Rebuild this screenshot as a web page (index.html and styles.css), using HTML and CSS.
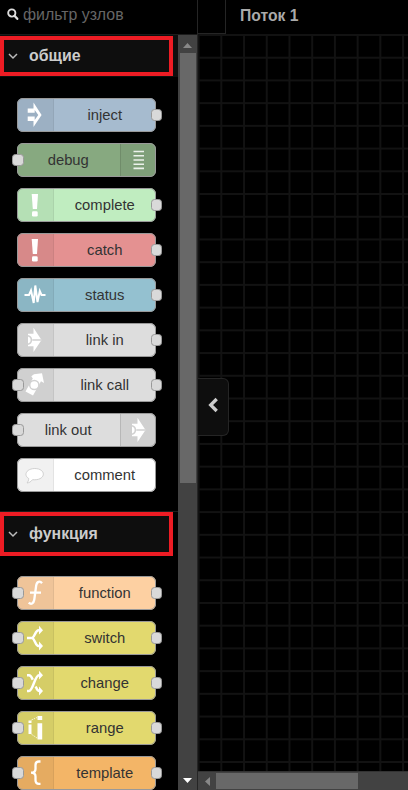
FILE: index.html
```html
<!DOCTYPE html>
<html lang="ru">
<head>
<meta charset="utf-8">
<title>Node-RED</title>
<link rel="stylesheet" href="styles.css">
</head>
<body>
<div class="app">
  <aside class="palette">
    <div class="search">
      <svg width="12" height="13" viewBox="0 0 12 13"><circle cx="4.8" cy="5" r="3.6" fill="none" stroke="#ddd" stroke-width="1.9"/><path d="M7.5 7.8L10.3 10.8" stroke="#ddd" stroke-width="2.3" stroke-linecap="round"/></svg>
      <span>фильтр узлов</span>
    </div>
    <div class="body">
      <div class="list">
        <section class="category first">
          <h2 class="heading"><svg class="chevron" width="10" height="7" viewBox="0 0 10 7"><path d="M1 1L5 5L9 1"/></svg>общие</h2>
          <div class="nodes">
            <div class="node inject"><span class="icon"><svg viewBox="0 0 36 34"><path d="M10.7 10.5H16.5V4.5L24.6 17L16.5 29V23H10.7V18.5H17.7V22L21.3 17L17.7 12V14.7H10.7Z"/></svg></span><span class="label">inject</span><i class="port out"></i></div>
            <div class="node debug right"><span class="icon"><svg viewBox="0 0 36 34"><path d="M12.5 8.5H23M12.5 12.7H23M12.5 17H23M12.5 21.2H23M12.5 25.4H23" fill="none" stroke="#fff" stroke-width="1.6" opacity=".85"/></svg></span><span class="label">debug</span><i class="port in"></i></div>
            <div class="node complete"><span class="icon"><svg viewBox="0 0 36 34"><path d="M14.7 6H21L20 21H15.8Z"/><rect x="15" y="23.3" width="5.7" height="5.2" rx="1.3"/></svg></span><span class="label">complete</span><i class="port out"></i></div>
            <div class="node catch"><span class="icon"><svg viewBox="0 0 36 34"><path d="M14.7 6H21L20 21H15.8Z"/><rect x="15" y="23.3" width="5.7" height="5.2" rx="1.3"/></svg></span><span class="label">catch</span><i class="port out"></i></div>
            <div class="node status"><span class="icon"><svg viewBox="0 0 36 34"><path d="M7.5 17H12L14 12.5L16.7 25L18.3 7.5L20.5 24L22.8 13L24.5 17H28.5" fill="none" stroke="#fff" stroke-width="2"/></svg></span><span class="label">status</span><i class="port out"></i></div>
            <div class="node link"><span class="icon"><svg viewBox="0 0 36 34"><path d="M11 10.8H16.5V4.8L24.5 17L16.5 29V23.3H11Z"/><path class="cut" d="M11 12.8A4.3 4.3 0 0 1 11 21.2M15.3 17H24.5"/></svg></span><span class="label">link in</span><i class="port out"></i></div>
            <div class="node link"><span class="icon"><svg viewBox="0 0 36 34"><path d="M14.3 8.3L17 6.3L25 5.3L27 15L24 13.2L16 27.5L8.5 23.4L15.8 10.5Z"/><circle class="cut" cx="17.3" cy="17" r="4.6"/></svg></span><span class="label">link call</span><i class="port in"></i><i class="port out"></i></div>
            <div class="node link right"><span class="icon"><svg viewBox="0 0 36 34"><path d="M11 10.8H16.5V4.8L24.5 17L16.5 29V23.3H11Z"/><path class="cut" d="M11 12.8A4.3 4.3 0 0 1 11 21.2M15.3 17H24.5"/></svg></span><span class="label">link out</span><i class="port in"></i></div>
            <div class="node comment"><span class="icon"><svg viewBox="0 0 36 34"><path d="M11.7 20.5C6.5 17.5 8.8 10.7 17.8 10.5C29.2 10.7 29.2 21.5 17.8 21.8L15.5 21.7C14 23.7 12 24.8 10 25C11 23.8 11.8 22.2 11.7 20.5Z" stroke="#ccc" stroke-width=".9"/></svg></span><span class="label">comment</span></div>
          </div>
        </section>
        <section class="category second">
          <h2 class="heading"><svg class="chevron" width="10" height="7" viewBox="0 0 10 7"><path d="M1 1L5 5L9 1"/></svg>функция</h2>
          <div class="nodes">
            <div class="node function"><span class="icon"><svg viewBox="0 0 36 34"><path d="M25 7.2C23 4.6 19.8 5.3 19.2 9.5L17.3 23.5C16.6 28 14 28.8 11.7 26.7M13 16.7H24" fill="none" stroke="#fff" stroke-width="2.3"/></svg></span><span class="label">function</span><i class="port in"></i><i class="port out"></i></div>
            <div class="node logic"><span class="icon"><svg viewBox="0 0 36 34"><path d="M10 17H15.5M23 9.2H21.5C18.5 9.2 18 15.5 15.3 17C18 18.5 18.5 25 21.5 25H23" fill="none" stroke="#fff" stroke-width="2.5"/><path d="M22 4.8L26 9.2L22 13.6ZM22 20.6L26 25L22 29.4Z"/></svg></span><span class="label">switch</span><i class="port in"></i><i class="port out"></i></div>
            <div class="node logic"><span class="icon"><svg viewBox="0 0 36 34"><path d="M10 9.2H12C14 9.2 14.8 11.5 15.7 13.7M18.7 20.5C19.6 22.7 20.3 25 22.5 25H23M10 25H12C16 25 17.8 9.2 22 9.2H23" fill="none" stroke="#fff" stroke-width="2.5"/><path d="M22 4.8L26 9.2L22 13.6ZM22 20.6L26 25L22 29.4Z"/></svg></span><span class="label">change</span><i class="port in"></i><i class="port out"></i></div>
            <div class="node logic"><span class="icon"><svg viewBox="0 0 36 34"><path d="M11.5 9.5H14.5V12H11.5ZM11.5 13.5H14.5V23H11.5ZM20.5 5H25.2V9H20.5ZM20.5 12.3H25.2V28.5H20.5Z"/><path d="M14.5 9L20 6.5M14.5 23.3L20 27" fill="none" stroke="#fff" stroke-width=".8" stroke-dasharray="1.5 1"/></svg></span><span class="label">range</span><i class="port in"></i><i class="port out"></i></div>
            <div class="node template"><span class="icon"><svg viewBox="0 0 36 34"><path d="M23.5 5.5H22C19.3 5.5 18.5 6.5 18.5 9V13C18.5 15.5 17.5 16.7 14 16.7C17.5 16.7 18.5 18 18.5 20.5V24C18.5 26.7 19.3 27.8 22 27.8H23.5" fill="none" stroke="#fff" stroke-width="2.3"/></svg></span><span class="label">template</span><i class="port in"></i><i class="port out"></i></div>
          </div>
        </section>
      </div>
      <div class="vscroll">
        <svg width="9" height="5" viewBox="0 0 9 5"><path d="M0 5L4.5 0L9 5Z" fill="#888"/></svg>
        <div class="vthumb"></div>
        <svg class="down" width="9" height="5" viewBox="0 0 9 5"><path d="M0 0L4.5 5L9 0Z" fill="#fff"/></svg>
      </div>
    </div>
  </aside>
  <main class="workspace">
    <div class="tabs"><div class="spacer"></div><div class="tab">Поток 1</div></div>
    <div class="canvas"></div>
    <div class="hscroll"><svg width="5" height="9" viewBox="0 0 5 9"><path d="M5 0L0 4.5L5 9Z" fill="#888"/></svg><div class="hthumb"></div></div>
    <div class="toggle"><svg width="12" height="16" viewBox="0 0 12 16"><path d="M9.7 2L3.7 8L9.7 14" fill="none" stroke="#ccc" stroke-width="3.3"/></svg></div>
  </main>
</div>
</body>
</html>
```
FILE: styles.css
```css
* { box-sizing: border-box; }
body {
  margin: 0;
  background: #000;
  font-family: "Liberation Sans", Arial, sans-serif;
  overflow: hidden;
}
svg { display: block; flex: none; }
.app { display: flex; width: 408px; height: 790px; overflow: hidden; }
.palette {
  width: 198px;
  flex: none;
  display: flex;
  flex-direction: column;
  border-right: 1px solid #252525;
}
.search {
  height: 34px;
  flex: none;
  display: flex;
  align-items: center;
  gap: 4px;
  padding: 0 0 5px 7px;
  color: #666;
  font-size: 15.9px;
  white-space: nowrap;
}
.body { flex: 1; min-height: 0; display: flex; border-top: 1px solid #1c1c1c; }
.list { flex: 1; min-width: 0; overflow: hidden; }
.category { display: flex; flex-direction: column; }
.heading {
  margin: 0;
  display: flex;
  align-items: center;
  gap: 11px;
  padding-left: 4px;
  width: 173px;
  border: 4px solid #ed1c24;
  background: #0e0e0e;
  color: #ccc;
  font-size: 15.9px;
  font-weight: bold;
}
.first { background: linear-gradient(#0e0e0e 42px, #000 42px); }
.first .heading { height: 40px; margin-top: 1px; }
.second { border-top: 1px solid #1c1c1c; margin-top: 19px; }
.second .heading { height: 44px; }
.chevron path { fill: none; stroke: #bbb; stroke-width: 1.5; }
.nodes { display: flex; flex-direction: column; gap: 11px; padding: 22px 0 0 17px; }
.second .nodes { padding-top: 20px; }
.node {
  position: relative;
  display: flex;
  width: 139px;
  height: 34px;
  flex: none;
  border-radius: 6px;
  color: #333;
  font-size: 14.8px;
}
.node::after {
  content: "";
  position: absolute;
  inset: 0;
  border: 1px solid #999;
  border-radius: 6px;
}
.right { flex-direction: row-reverse; }
.icon {
  width: 36.5px;
  flex: none;
  background: rgba(0, 0, 0, .055);
  border-right: 1px solid rgba(0, 0, 0, .06);
  border-radius: 6px 0 0 6px;
}
.icon svg { width: 36px; height: 34px; fill: #fff; }
.icon .cut { fill: none; stroke: #d1d1d1; stroke-width: 1.5; }
.right .icon { border-radius: 0 6px 6px 0; border-right: 0; border-left: 1px solid rgba(0, 0, 0, .12); }
.label { flex: 1; text-align: center; line-height: 34px; }
.port {
  position: absolute;
  z-index: 1;
  top: 11px;
  width: 11.5px;
  height: 12px;
  border: 1px solid #999;
  border-radius: 3.5px;
  background: #d9d9d9;
}
.in { left: -4.8px; }
.out { right: -6px; }
.inject { background: #a6bbcf; }
.debug { background: #87a980; }
.complete { background: #c0edc0; }
.catch { background: #e49191; }
.status { background: #94c1d0; }
.link { background: #ddd; }
.comment { background: #fff; }
.function { background: #fdd0a2; }
.logic { background: #e2d96e; }
.template { background: #f3b567; }
.vscroll {
  width: 19px;
  flex: none;
  display: flex;
  flex-direction: column;
  align-items: center;
  padding-top: 8px;
  background: #424242;
}
.vthumb { width: 16px; height: 430px; margin-top: 5px; background: #686868; }
.down { margin-top: auto; margin-bottom: 7px; }
.workspace {
  position: relative;
  flex: 1;
  min-width: 0;
  display: flex;
  flex-direction: column;
}
.tabs { height: 34px; flex: none; display: flex; }
.spacer { width: 28px; border-right: 1px solid #252525; border-bottom: 1px solid #252525; }
.tab { padding: 7px 0 0 14px; color: #aaa; font-size: 15.7px; font-weight: bold; line-height: 18px; }
.canvas {
  flex: 1;
  background-image:
    linear-gradient(#121212 1.5px, transparent 1.5px),
    linear-gradient(90deg, #121212 1.5px, transparent 1.5px);
  background-size: 22.73px 22.73px;
  background-position: 0 0, -.4px 0;
}
.hscroll {
  height: 19px;
  flex: none;
  display: flex;
  align-items: center;
  gap: 6px;
  padding-left: 7px;
  border-top: 1px solid #333;
  background: #424242;
}
.hthumb { width: 142px; height: 16px; background: #686868; }
.toggle {
  position: absolute;
  left: 0;
  top: 378px;
  width: 31px;
  height: 58px;
  display: flex;
  align-items: center;
  padding: 0 0 4px 9px;
  border: 1px solid #252525;
  border-left: 0;
  border-radius: 0 6px 6px 0;
  background: #0e0e0e;
}
```
